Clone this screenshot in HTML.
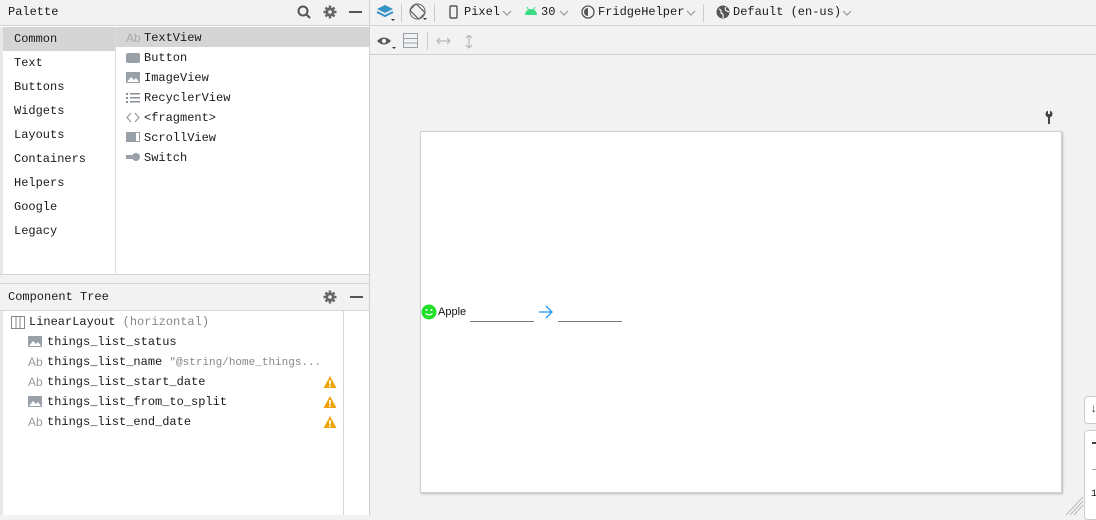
<!DOCTYPE html>
<html><head><style>
*{box-sizing:border-box;margin:0;padding:0}
body{width:1096px;height:515px;overflow:hidden;background:#f2f2f2;font-family:"Liberation Mono",monospace;font-size:12px;color:#1a1a1a;position:relative}
.a{position:absolute}
.t{position:absolute;white-space:nowrap}
.g{color:#888}
</style></head><body>
<div class="a" style="left:0;top:0;width:370px;height:515px;background:#fff;border-right:1px solid #d0d0d0"></div>
<div class="a" style="left:0;top:0;width:369px;height:26px;background:#f2f2f2;border-bottom:1px solid #d5d5d5"></div>
<div class="t" style="left:8px;top:5px">Palette</div>
<svg class="a" style="left:296px;top:5px" width="70" height="16"><circle cx="7" cy="6" r="4.5" fill="none" stroke="#555" stroke-width="2"/><line x1="10" y1="9" x2="14" y2="13" stroke="#555" stroke-width="2.2"/><g stroke="#666" stroke-width="2.5"><line x1="34" y1="0.5" x2="34" y2="13.5"/><line x1="27.5" y1="7" x2="40.5" y2="7"/><line x1="29.5" y1="2.5" x2="38.5" y2="11.5"/><line x1="38.5" y1="2.5" x2="29.5" y2="11.5"/></g><circle cx="34" cy="7" r="4.5" fill="#666"/><circle cx="34" cy="7" r="1.8" fill="#f2f2f2"/><line x1="53" y1="7" x2="66" y2="7" stroke="#555" stroke-width="2"/></svg>
<div class="a" style="left:0;top:27px;width:3px;height:488px;background:#e8e8e8"></div>
<div class="a" style="left:3px;top:27px;width:112px;height:24px;background:#d5d5d5"></div>
<div class="a" style="left:115px;top:27px;width:1px;height:247px;background:#ddd"></div>
<div class="a" style="left:116px;top:27px;width:253px;height:20px;background:#d5d5d5"></div>
<div class="t" style="left:14px;top:32px">Common</div>
<div class="t" style="left:14px;top:56px">Text</div>
<div class="t" style="left:14px;top:80px">Buttons</div>
<div class="t" style="left:14px;top:104px">Widgets</div>
<div class="t" style="left:14px;top:128px">Layouts</div>
<div class="t" style="left:14px;top:152px">Containers</div>
<div class="t" style="left:14px;top:176px">Helpers</div>
<div class="t" style="left:14px;top:200px">Google</div>
<div class="t" style="left:14px;top:224px">Legacy</div>
<div class="t g" style="left:126px;top:31px;color:#aaa;font-family:'Liberation Sans'">Ab</div>
<div class="t" style="left:144px;top:31px">TextView</div>
<div class="a" style="left:126px;top:53px;width:14px;height:10px;background:#9aa0a8;border-radius:2px"></div>
<div class="t" style="left:144px;top:51px">Button</div>
<svg class="a" style="left:126px;top:72px" width="14" height="11"><rect width="14" height="11" fill="#9aa0a8"/><path d="M1 10 L5 5 L8 8 L10 6 L13 10Z" fill="#fff"/></svg>
<div class="t" style="left:144px;top:71px">ImageView</div>
<svg class="a" style="left:126px;top:92px" width="14" height="11"><g fill="#8a9099"><rect x="0" y="1" width="2" height="2"/><rect x="0" y="5" width="2" height="2"/><rect x="0" y="9" width="2" height="2"/><rect x="4" y="1" width="10" height="1.5"/><rect x="4" y="5" width="10" height="1.5"/><rect x="4" y="9" width="10" height="1.5"/></g></svg>
<div class="t" style="left:144px;top:91px">RecyclerView</div>
<svg class="a" style="left:126px;top:112px" width="14" height="11"><path d="M5 1 L1 5.5 L5 10 M9 1 L13 5.5 L9 10" fill="none" stroke="#999" stroke-width="1.2"/></svg>
<div class="t" style="left:144px;top:111px">&lt;fragment&gt;</div>
<svg class="a" style="left:126px;top:132px" width="14" height="10"><rect width="14" height="10" fill="#9aa0a8"/><rect x="10" y="1" width="3" height="8" fill="#fff"/></svg>
<div class="t" style="left:144px;top:131px">ScrollView</div>
<svg class="a" style="left:126px;top:152px" width="14" height="10"><rect x="0" y="3" width="8" height="4" fill="#9aa0a8"/><circle cx="10" cy="5" r="4" fill="#9aa0a8"/></svg>
<div class="t" style="left:144px;top:151px">Switch</div>
<div class="a" style="left:0;top:274px;width:369px;height:9px;background:#f2f2f2;border-top:1px solid #d5d5d5"></div>
<div class="a" style="left:0;top:283px;width:369px;height:28px;background:#f2f2f2;border-top:1px solid #d5d5d5;border-bottom:1px solid #d5d5d5"></div>
<div class="t" style="left:8px;top:290px">Component Tree</div>
<svg class="a" style="left:322px;top:290px" width="46" height="16"><g stroke="#666" stroke-width="2.5"><line x1="8" y1="0.5" x2="8" y2="13.5"/><line x1="1.5" y1="7" x2="14.5" y2="7"/><line x1="3.5" y1="2.5" x2="12.5" y2="11.5"/><line x1="12.5" y1="2.5" x2="3.5" y2="11.5"/></g><circle cx="8" cy="7" r="4.5" fill="#666"/><circle cx="8" cy="7" r="1.8" fill="#f2f2f2"/><line x1="28" y1="7" x2="41" y2="7" stroke="#555" stroke-width="2"/></svg>
<div class="a" style="left:343px;top:311px;width:1px;height:204px;background:#d5d5d5"></div>
<svg class="a" style="left:11px;top:316px" width="14" height="13"><rect x="0.5" y="0.5" width="13" height="12" fill="none" stroke="#888"/><line x1="5" y1="0" x2="5" y2="13" stroke="#888"/><line x1="9" y1="0" x2="9" y2="13" stroke="#888"/></svg>
<div class="t" style="left:29px;top:315px">LinearLayout <span class="g">(horizontal)</span></div>
<svg class="a" style="left:28px;top:336px" width="14" height="11"><rect width="14" height="11" fill="#9aa0a8"/><path d="M1 10 L5 5 L8 8 L10 6 L13 10Z" fill="#fff"/></svg>
<div class="t" style="left:47px;top:335px">things_list_status</div>
<div class="t" style="left:28px;top:355px;color:#999;font-family:'Liberation Sans'">Ab</div>
<div class="t" style="left:47px;top:355px">things_list_name <span class="g" style="font-size:11px">"@string/home_things...</span></div>
<div class="t" style="left:28px;top:375px;color:#999;font-family:'Liberation Sans'">Ab</div>
<div class="t" style="left:47px;top:375px">things_list_start_date</div>
<svg class="a" style="left:28px;top:396px" width="14" height="11"><rect width="14" height="11" fill="#9aa0a8"/><path d="M1 10 L5 5 L8 8 L10 6 L13 10Z" fill="#fff"/></svg>
<div class="t" style="left:47px;top:395px">things_list_from_to_split</div>
<div class="t" style="left:28px;top:415px;color:#999;font-family:'Liberation Sans'">Ab</div>
<div class="t" style="left:47px;top:415px">things_list_end_date</div>
<svg class="a" style="left:323px;top:375px" width="14" height="55"><g><path d="M7 1 L13.5 13 L0.5 13Z" fill="#f0a30a"/><rect x="6.2" y="5" width="1.6" height="4.5" fill="#fff"/><rect x="6.2" y="10.5" width="1.6" height="1.6" fill="#fff"/></g><g transform="translate(0,20)"><path d="M7 1 L13.5 13 L0.5 13Z" fill="#f0a30a"/><rect x="6.2" y="5" width="1.6" height="4.5" fill="#fff"/><rect x="6.2" y="10.5" width="1.6" height="1.6" fill="#fff"/></g><g transform="translate(0,40)"><path d="M7 1 L13.5 13 L0.5 13Z" fill="#f0a30a"/><rect x="6.2" y="5" width="1.6" height="4.5" fill="#fff"/><rect x="6.2" y="10.5" width="1.6" height="1.6" fill="#fff"/></g></svg>
<div class="a" style="left:370px;top:0;width:726px;height:26px;border-bottom:1px solid #d5d5d5"></div>
<div class="a" style="left:370px;top:26px;width:726px;height:29px;border-bottom:1px solid #cfcfcf"></div>
<svg class="a" style="left:376px;top:4px" width="20" height="18"><path d="M9 1 L17 5 L9 9 L1 5Z" fill="#3592c4"/><path d="M1 8 L9 12 L17 8" fill="none" stroke="#3592c4" stroke-width="2"/><path d="M15 15 L19 15 L17 17Z" fill="#333"/></svg>
<div class="a" style="left:401px;top:4px;width:1px;height:18px;background:#ccc"></div>
<svg class="a" style="left:409px;top:3px" width="20" height="18"><rect x="4" y="2" width="9" height="13" rx="1" transform="rotate(-45 8.5 8.5)" fill="none" stroke="#666" stroke-width="1.3"/><circle cx="8.5" cy="8.5" r="7.5" fill="none" stroke="#666" stroke-width="1"/><path d="M14 15 L18 15 L16 17Z" fill="#333"/></svg>
<div class="a" style="left:434px;top:4px;width:1px;height:18px;background:#ccc"></div>
<svg class="a" style="left:449px;top:5px" width="10" height="15"><rect x="1" y="1" width="7" height="12" rx="1" fill="none" stroke="#555" stroke-width="1.4"/></svg>
<div class="t" style="left:464px;top:5px">Pixel</div>
<svg class="a" style="left:0;top:0" width="1096" height="26"><g fill="none" stroke="#999" stroke-width="1.2"><path d="M503 11 L507 15 L511 11"/><path d="M560 11 L564 15 L568 11"/><path d="M687 11 L691 15 L695 11"/><path d="M843 11 L847 15 L851 11"/></g></svg>
<svg class="a" style="left:524px;top:6px" width="14" height="10"><path d="M1 9 A6 6 0 0 1 13 9Z" fill="#3ddc84"/><line x1="3" y1="1" x2="4.5" y2="3.5" stroke="#3ddc84"/><line x1="11" y1="1" x2="9.5" y2="3.5" stroke="#3ddc84"/></svg>
<div class="t" style="left:541px;top:5px">30</div>
<svg class="a" style="left:581px;top:5px" width="15" height="15"><circle cx="7" cy="7" r="6" fill="none" stroke="#555" stroke-width="1.3"/><path d="M7 3 A4 4 0 0 0 7 11Z" fill="#555"/></svg>
<div class="t" style="left:598px;top:5px">FridgeHelper</div>
<div class="a" style="left:703px;top:4px;width:1px;height:18px;background:#ccc"></div>
<svg class="a" style="left:716px;top:5px" width="15" height="15"><circle cx="7" cy="7" r="6.5" fill="#555"/><path d="M3 4 Q6 5 5 8 Q8 9 7 13 M10 2 Q8 5 11 6 L13 7" fill="none" stroke="#f2f2f2" stroke-width="1.2"/></svg>
<div class="t" style="left:733px;top:5px">Default (en-us)</div>
<svg class="a" style="left:376px;top:34px" width="20" height="16"><path d="M1 7 Q8 0 15 7 Q8 14 1 7Z" fill="#555"/><circle cx="8" cy="7" r="2.2" fill="#f2f2f2"/><path d="M16 13 L20 13 L18 15Z" fill="#333"/></svg>
<svg class="a" style="left:403px;top:33px" width="16" height="16"><rect x="0.5" y="0.5" width="14" height="14" fill="none" stroke="#9aa0a8"/><line x1="0" y1="5.5" x2="15" y2="5.5" stroke="#9aa0a8"/><line x1="0" y1="10" x2="15" y2="10" stroke="#9aa0a8"/></svg>
<div class="a" style="left:427px;top:32px;width:1px;height:18px;background:#ccc"></div>
<svg class="a" style="left:436px;top:35px" width="40" height="14"><path d="M1 6 L14 6 M4 3 L1 6 L4 9 M11 3 L14 6 L11 9" fill="none" stroke="#bbb" stroke-width="1.3"/><path d="M33 0 L33 13 M30 3 L33 0 L36 3 M30 10 L33 13 L36 10" fill="none" stroke="#bbb" stroke-width="1.3"/></svg>
<svg class="a" style="left:1043px;top:110px" width="12" height="15"><circle cx="6" cy="4" r="3.5" fill="#444"/><rect x="5" y="0" width="2" height="4" fill="#f2f2f2"/><rect x="5" y="6" width="2" height="8" fill="#444"/></svg>
<div class="a" style="left:420px;top:131px;width:642px;height:362px;background:#fff;border:1px solid #d0d0d0;box-shadow:1px 1px 2px #bbb"></div>
<svg class="a" style="left:421px;top:304px" width="16" height="16"><circle cx="8" cy="8" r="7.5" fill="#22e02a"/><circle cx="5.5" cy="6" r="1" fill="#fff"/><circle cx="10.5" cy="6" r="1" fill="#fff"/><path d="M4.5 9.5 Q8 12.5 11.5 9.5" fill="none" stroke="#fff" stroke-width="1.2"/></svg>
<div class="t" style="left:438px;top:306px;font-family:'Liberation Sans';font-size:11px;color:#111">Apple</div>
<div class="a" style="left:470px;top:321px;width:64px;height:1px;background:#777"></div>
<svg class="a" style="left:538px;top:305px" width="16" height="14"><path d="M1 7 L14 7 M8 1 L14 7 L8 13" fill="none" stroke="#2196f3" stroke-width="1.3"/></svg>
<div class="a" style="left:558px;top:321px;width:64px;height:1px;background:#777"></div>
<svg class="a" style="left:1064px;top:494px" width="20" height="21"><g stroke="#aaa" stroke-width="0.8"><line x1="2" y1="21" x2="19" y2="3"/><line x1="6" y1="21" x2="19" y2="7"/><line x1="10" y1="21" x2="19" y2="11"/></g></svg>
<div class="a" style="left:1084px;top:396px;width:20px;height:28px;background:#fff;border:1px solid #ccc;border-radius:4px"></div>
<div class="t" style="left:1090px;top:402px;font-size:12px;color:#333">↓</div>
<div class="a" style="left:1084px;top:430px;width:20px;height:90px;background:#fff;border:1px solid #ccc;border-radius:4px"></div>
<div class="a" style="left:1092px;top:442px;width:6px;height:2px;background:#444"></div>
<div class="a" style="left:1092px;top:469px;width:6px;height:1px;background:#aaa"></div>
<div class="t" style="left:1091px;top:489px;font-size:10px">1</div>
</body></html>
